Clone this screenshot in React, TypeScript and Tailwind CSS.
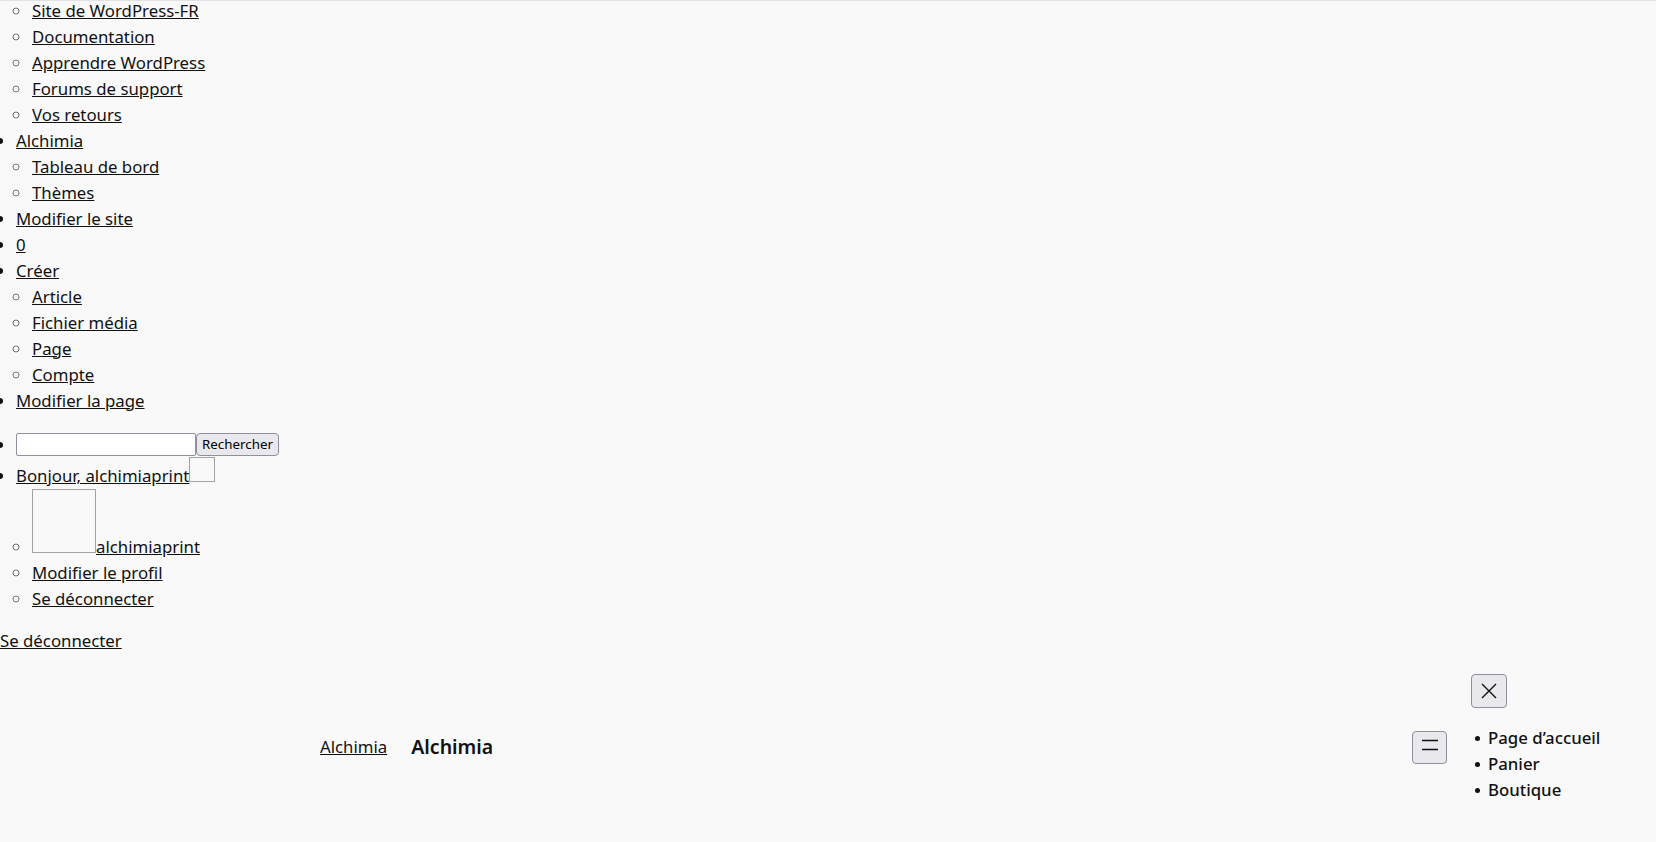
import React from 'react';

const Link = ({ children }: { children: React.ReactNode }) => (
    <a href="#" className="underline text-[#111]">{children}</a>
);

const adminSub = ['Site de WordPress-FR', 'Documentation', 'Apprendre WordPress', 'Forums de support', 'Vos retours'];
const siteSub = ['Tableau de bord', 'Thèmes'];
const newSub = ['Article', 'Fichier média', 'Page', 'Compte'];
const navItems = ["Page d\u2019accueil", 'Panier', 'Boutique'];

export default function App() {
    return (
        <div className="min-h-screen overflow-hidden bg-[#f9f9f9] text-[#111] text-[16.8px] leading-[26px] font-['Noto_Sans','Open_Sans',sans-serif]">
            <div className="h-px bg-[#e2e2e2]" />

            {/* Admin bar, rendered without styles */}
            <ul className="-mt-[3.5px] pl-8 list-[circle] marker:text-[#777]">
                {adminSub.map(item => (
                    <li key={item}><Link>{item}</Link></li>
                ))}
            </ul>
            <ul className="pl-4 list-disc mb-4">
                <li>
                    <Link>Alchimia</Link>
                    <ul className="pl-4 list-[circle] marker:text-[#777]">
                        {siteSub.map(item => (
                            <li key={item}><Link>{item}</Link></li>
                        ))}
                    </ul>
                </li>
                <li><Link>Modifier le site</Link></li>
                <li><Link>0</Link></li>
                <li>
                    <Link>Créer</Link>
                    <ul className="pl-4 list-[circle] marker:text-[#777]">
                        {newSub.map(item => (
                            <li key={item}><Link>{item}</Link></li>
                        ))}
                    </ul>
                </li>
                <li><Link>Modifier la page</Link></li>
                <li className="pt-[19px] leading-[24px]">
                    <form className="inline" onSubmit={(e) => e.preventDefault()}>
                        <input
                            type="text"
                            className="inline-block align-top w-[180px] h-[23px] bg-white border border-[#8f8f9d] rounded-[2px] px-1 text-[13px] outline-none"
                        />
                        <button
                            type="submit"
                            className="inline-block align-top w-[83px] h-[23px] bg-[#e9e9ed] border border-[#8f8f9d] rounded-[4px] text-[13.33px] leading-[19px] text-black"
                        >
                            Rechercher
                        </button>
                    </form>
                </li>
                <li>
                    <Link>Bonjour, alchimiaprint</Link>
                    <span className="inline-block w-[26px] h-[25px] border border-[#a3a3a3]" />
                    <ul className="pl-4 list-[circle] marker:text-[#777]">
                        <li>
                            <span className="inline-block w-[64px] h-[64px] border border-[#a3a3a3]" />
                            <Link>alchimiaprint</Link>
                        </li>
                        <li><Link>Modifier le profil</Link></li>
                        <li><Link>Se déconnecter</Link></li>
                    </ul>
                </li>
            </ul>
            <Link>Se déconnecter</Link>

            {/* Site header */}
            <header className="flex items-start pt-[20px] pl-[320px]">
                <div className="mt-[57px] h-[33px] flex items-center gap-6">
                    <Link>Alchimia</Link>
                    <p className="text-[19.5px] font-semibold leading-[28px]">Alchimia</p>
                </div>
                <div className="ml-auto mt-[57px] h-[33px] flex items-center">
                    <button className="w-[35px] h-[33px] flex items-center justify-center bg-[#e9e9ed] border border-[#8f8f9d] rounded-[4px]">
                        <svg width="20" height="20" viewBox="0 0 20 20" fill="none" stroke="#111" strokeWidth="1.5">
                            <path d="M2 3.5h16M2 12.5h16" />
                        </svg>
                    </button>
                </div>
                <div className="ml-6 w-[185px]">
                    <button className="w-[36px] h-[34px] flex items-center justify-center bg-[#e9e9ed] border border-[#8f8f9d] rounded-[4px]">
                        <svg width="16" height="16" viewBox="0 0 16 16" fill="none" stroke="#111" strokeWidth="1.4">
                            <path d="M1 1l14 14M15 1L1 15" />
                        </svg>
                    </button>
                    <ul className="mt-[17px] font-medium">
                        {navItems.map(item => (
                            <li key={item}>
                                <span className="inline-block align-middle ml-[4px] mr-[8px] w-[5px] h-[5px] rounded-full bg-[#111]" />
                                {item}
                            </li>
                        ))}
                    </ul>
                </div>
            </header>
        </div>
    );
}
